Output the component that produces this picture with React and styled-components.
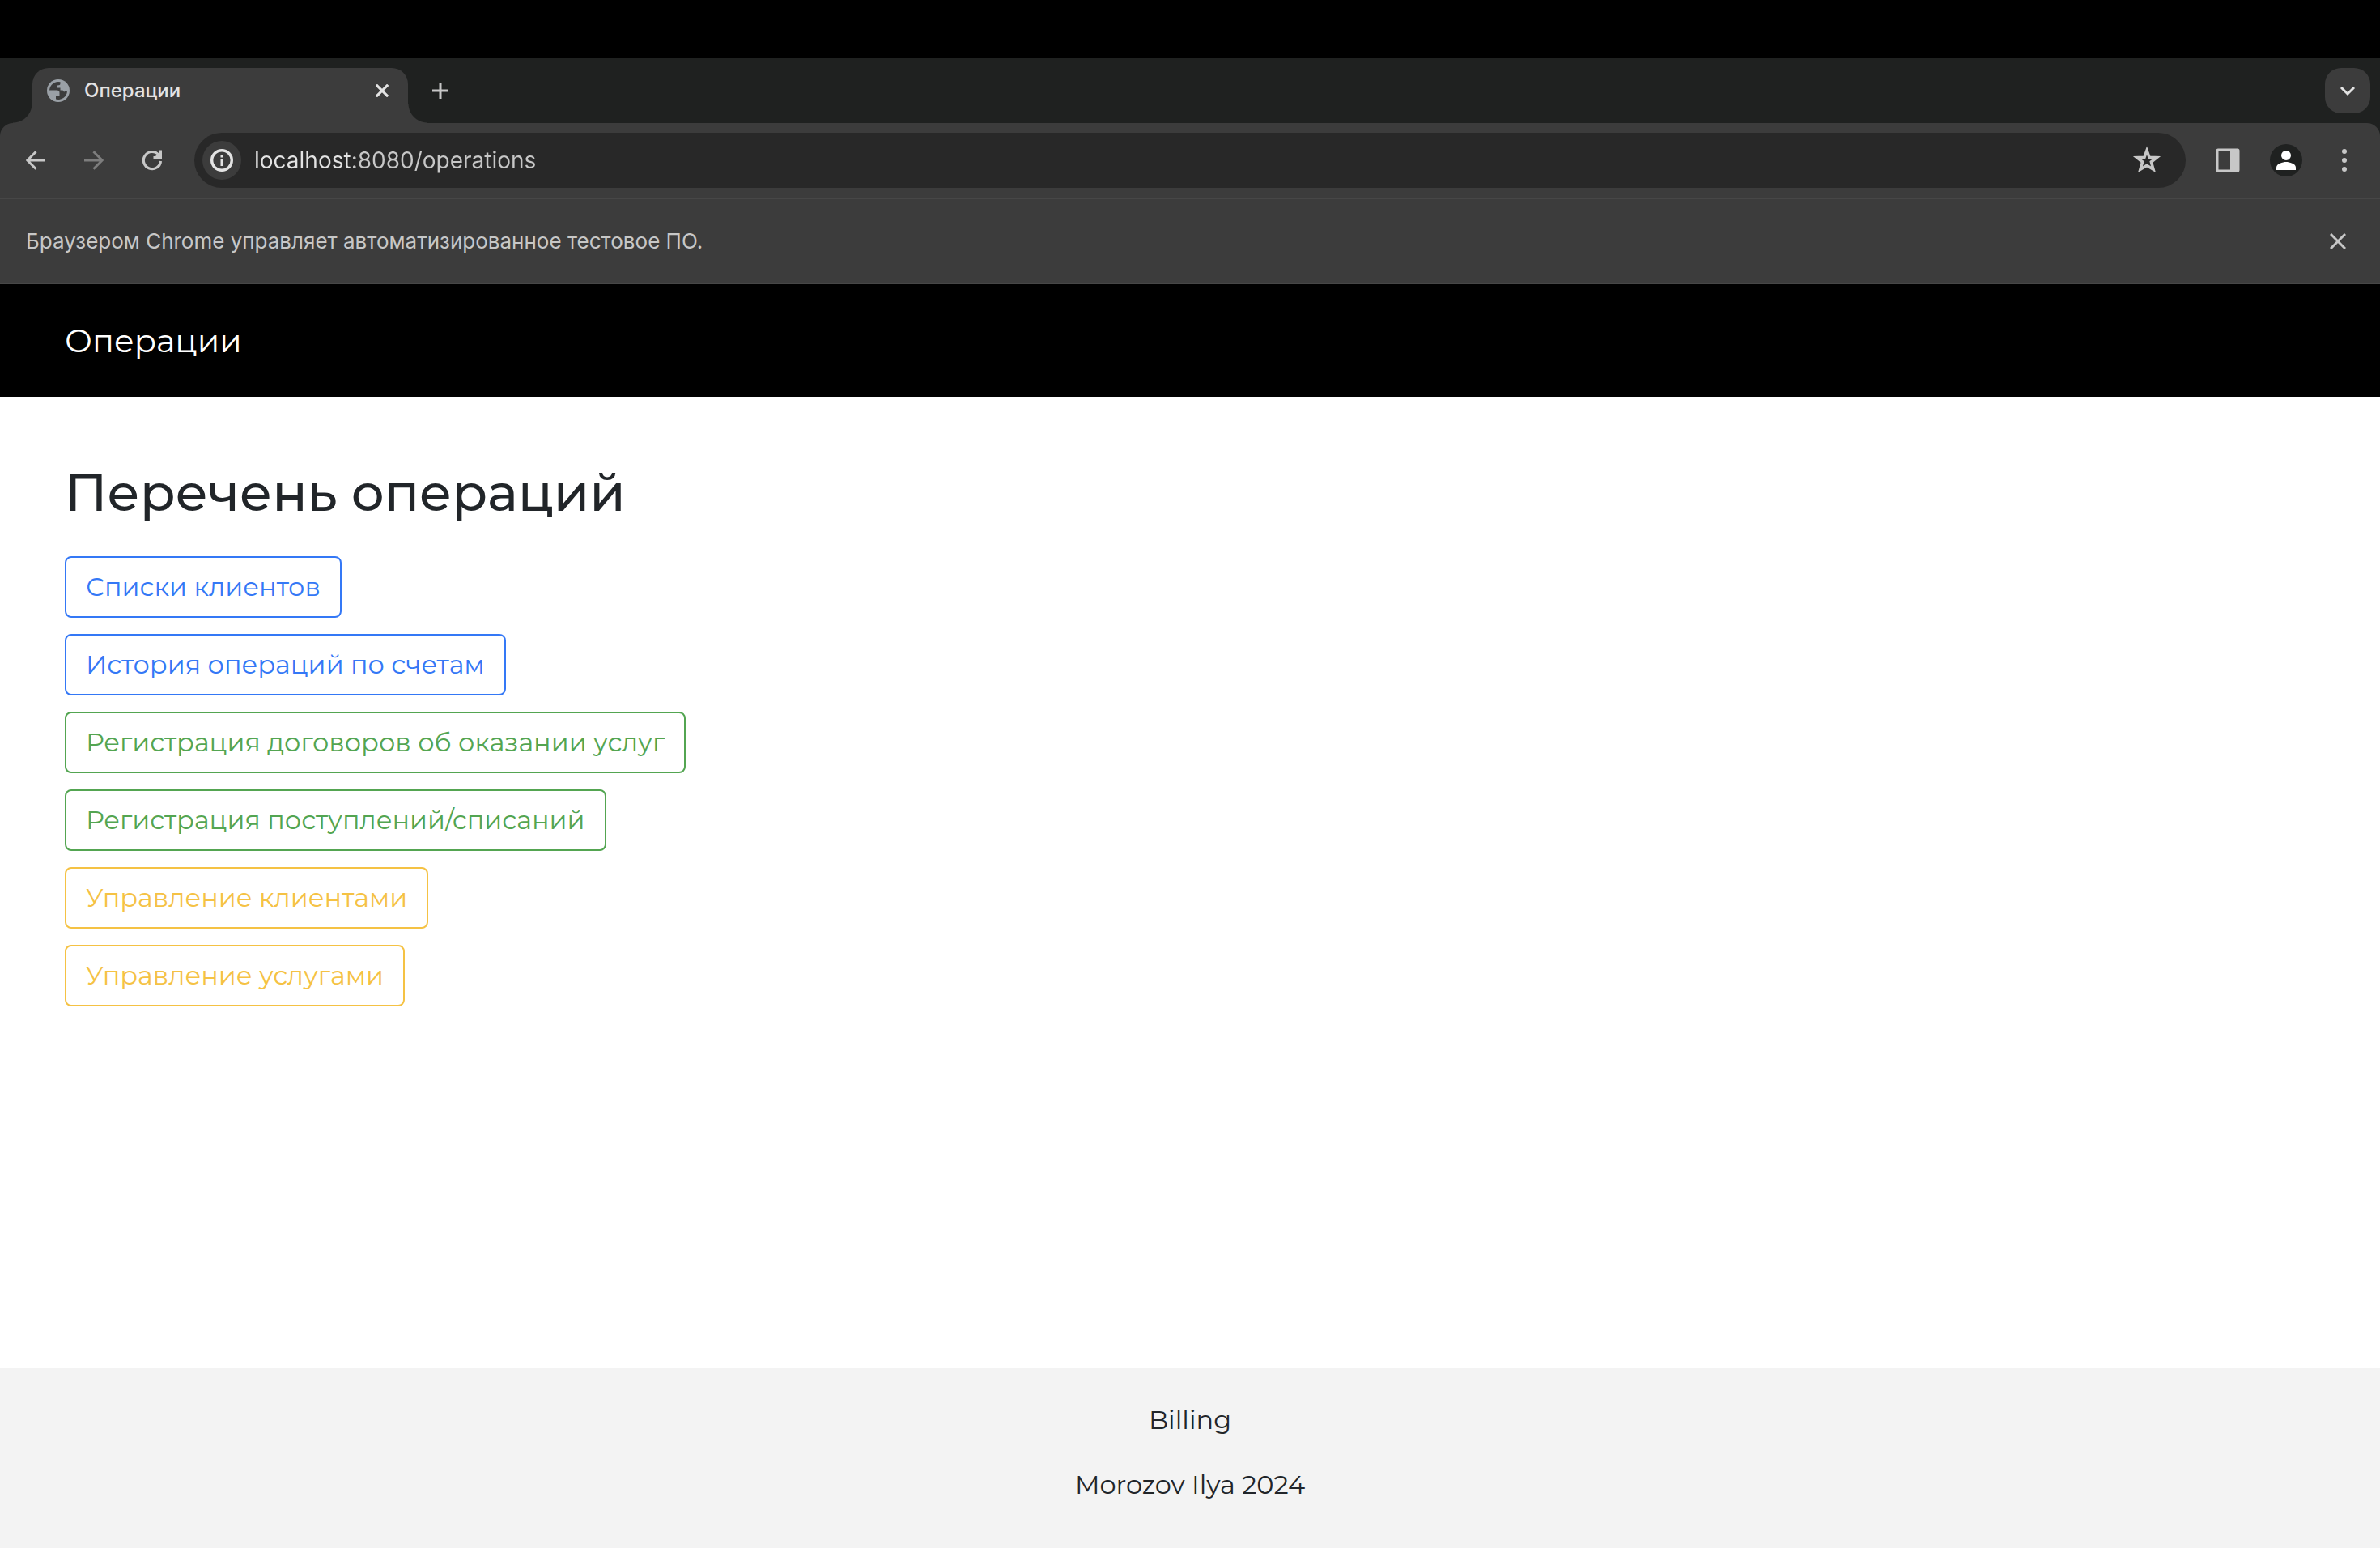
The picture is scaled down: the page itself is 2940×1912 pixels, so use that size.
import React from 'react';
import styled, { createGlobalStyle } from 'styled-components';

const Global = createGlobalStyle`
  * { box-sizing: border-box; }
  body { margin: 0; background: #fff; }
  button { font: inherit; }
`;

const chromeFont = 'Inter, Roboto, sans-serif';
const siteFont = 'Montserrat, Inter, sans-serif';

const tones = {
  primary: '#3478f6',
  success: '#53a551',
  warning: '#f5c244',
};

const Screen = styled.div`
  display: flex;
  flex-direction: column;
  min-height: 100vh;
  padding-top: 72px;
  background: #000;
`;

const Browser = styled.div`
  font-family: ${chromeFont};
  color: #e3e3e3;
  background: #1f2120;
`;

const TabStrip = styled.div`
  display: flex;
  align-items: flex-start;
  height: 80px;
  padding: 12px 12px 0 40px;
`;

const Tab = styled.div`
  position: relative;
  display: flex;
  align-items: center;
  width: 464px;
  height: 68px;
  padding: 0 18px;
  border-radius: 20px 20px 0 0;
  background: #3c3c3c;

  &::before,
  &::after {
    content: '';
    position: absolute;
    bottom: 0;
    width: 24px;
    height: 24px;
  }
  &::before {
    right: 100%;
    background: radial-gradient(circle at 0 0, transparent 23px, #3c3c3c 24px);
  }
  &::after {
    left: 100%;
    background: radial-gradient(circle at 100% 0, transparent 23px, #3c3c3c 24px);
  }
`;

const TabBody = styled.div`
  display: flex;
  flex: 1;
  align-items: center;
  gap: 18px;
  height: 56px;
  margin-bottom: 12px;
`;

const TabTitle = styled.span`
  flex: 1;
  font-size: 24px;
  font-weight: 500;
  line-height: 32px;
`;

const IconButton = styled.button`
  display: flex;
  flex: none;
  align-items: center;
  justify-content: center;
  width: ${(p) => p.$size || 56}px;
  height: ${(p) => p.$size || 56}px;
  padding: 0;
  border: 0;
  border-radius: ${(p) => p.$radius || '50%'};
  background: ${(p) => p.$bg || 'none'};
  color: ${(p) => p.$color || '#c7c7c7'};
`;

const NewTab = styled(IconButton)`
  margin: 0 auto 0 12px;
`;

const Toolbar = styled.div`
  display: flex;
  align-items: center;
  height: 94px;
  padding: 0 16px;
  border-bottom: 2px solid #474747;
  border-radius: 16px 16px 0 0;
  background: #3c3c3c;
`;

const NavGroup = styled.div`
  display: flex;
  gap: 16px;
`;

const Omnibox = styled.div`
  display: flex;
  flex: 1;
  align-items: center;
  gap: 16px;
  height: 68px;
  margin: 0 24px;
  padding: 0 20px 0 10px;
  border-radius: 34px;
  background: #282828;
`;

/* The host part of the address is brighter than the port and path. */
const Address = styled.input`
  flex: 1;
  min-width: 0;
  height: 36px;
  padding: 0;
  border: 0;
  outline: 0;
  background: linear-gradient(90deg, #e3e3e3 120px, #c7c7c7 120px);
  background-clip: text;
  -webkit-background-clip: text;
  -webkit-text-fill-color: transparent;
  color: #c7c7c7;
  font-family: inherit;
  font-size: 28px;
  line-height: 36px;
`;

const InfoBar = styled.div`
  display: flex;
  align-items: center;
  justify-content: space-between;
  height: 105px;
  padding: 0 24px 0 32px;
  border-bottom: 1px solid #474747;
  background: #3c3c3c;
  font-size: 26px;
  line-height: 36px;
  color: #c7c7c7;
`;

const Site = styled.div`
  display: flex;
  flex: 1;
  flex-direction: column;
  background: #fff;
  font-family: ${siteFont};
  font-size: 32px;
  line-height: 48px;
  color: #212529;
`;

const SiteHeader = styled.header`
  padding: 40px 80px;
  background: #000;
`;

const Brand = styled.a`
  display: block;
  width: max-content;
  font-size: 40px;
  line-height: 59px;
  color: #fff;
  text-decoration: none;
`;

const Main = styled.main`
  flex: 1;
  padding: 80px;
`;

const Title = styled.h1`
  margin: 0 0 40px;
  font-size: 64px;
  font-weight: 500;
  line-height: 77px;
`;

const Operations = styled.nav`
  display: flex;
  flex-direction: column;
  align-items: flex-start;
  gap: 20px;
`;

const Operation = styled.a`
  padding: 12px 24px;
  border: 2px solid ${(p) => tones[p.$tone]};
  border-radius: 8px;
  color: ${(p) => tones[p.$tone]};
  text-decoration: none;
`;

const SiteFooter = styled.footer`
  display: flex;
  flex-direction: column;
  gap: 32px;
  padding: 40px 0 54px;
  background: #f3f3f3;
  text-align: center;
`;

const FooterLine = styled.p`
  margin: 0;
`;

const Svg = ({ size = 32, view = 24, children, ...rest }) => (
  <svg width={size} height={size} viewBox={`0 0 ${view} ${view}`} fill="none" aria-hidden="true" {...rest}>
    {children}
  </svg>
);

const Globe = () => (
  <Svg size={28} view={28}>
    <circle cx="14" cy="14" r="14" fill="#9aa0a6" />
    <path
      d="M3 13.500A11 11 0 0 1 16.500 3.300V5C16.500 6.800 15.500 7.500 13 7.500V10.500H16.500V13.500H19.500L21 15.500L25 14A11 11 0 0 1 11 24.600V20.500H15.500V16.500C15.500 14.500 14.500 13.500 12 13.500Z"
      fill="#3c3c3c"
    />
  </Svg>
);

const Cross = ({ size, weight }) => (
  <Svg size={size} view={20} stroke="currentColor" strokeWidth={weight}>
    <path d="M1 1 19 19M19 1 1 19" />
  </Svg>
);

const Arrow = ({ flip }) => (
  <Svg size={24} stroke="currentColor" strokeWidth="3">
    <path d={flip ? 'M0 12H21.500M11.500 1.200 22.200 12 11.500 22.800' : 'M24 12H2.500M12.500 1.200 1.800 12 12.500 22.800'} />
  </Svg>
);

const Reload = () => (
  <Svg size={32} view={32}>
    <path d="M26.500 17A10.600 10.600 0 1 1 24 9.200" stroke="currentColor" strokeWidth="3.200" />
    <path d="M28 3.500V14H17.500V11H25V3.500Z" fill="currentColor" />
    <path d="M20 11 25 6V11Z" fill="currentColor" />
  </Svg>
);

const Info = () => (
  <Svg size={28} view={28}>
    <circle cx="14" cy="14" r="12.300" stroke="currentColor" strokeWidth="3.400" />
    <path d="M12.500 12.500h3V21h-3ZM12.500 7.500h3v3h-3Z" fill="currentColor" />
  </Svg>
);

const Star = () => (
  <Svg size={36} view={36} stroke="currentColor" strokeWidth="3.600">
    <path d="M18 5.800 21 14.300 30.200 14.600 23.400 20 26 29.200 18 24.400 10 29.200 12.600 20 5.800 14.600 15 14.300Z" />
  </Svg>
);

const SidePanel = () => (
  <Svg size={30} view={30}>
    <rect x="2" y="2" width="26" height="26" rx="1" stroke="currentColor" strokeWidth="3" />
    <path d="M18 2h10v26H18Z" fill="currentColor" />
  </Svg>
);

const Person = () => (
  <Svg size={24}>
    <circle cx="12" cy="6" r="6" fill="#fff" />
    <path d="M0 24v-3c0-5 8-7 12-7s12 2 12 7v3Z" fill="#fff" />
  </Svg>
);

const Dots = () => (
  <Svg size={28} view={28}>
    <circle cx="14" cy="3" r="3" fill="currentColor" />
    <circle cx="14" cy="14" r="3" fill="currentColor" />
    <circle cx="14" cy="25" r="3" fill="currentColor" />
  </Svg>
);

const operations = [
  ['Списки клиентов', 'primary'],
  ['История операций по счетам', 'primary'],
  ['Регистрация договоров об оказании услуг', 'success'],
  ['Регистрация поступлений/списаний', 'success'],
  ['Управление клиентами', 'warning'],
  ['Управление услугами', 'warning'],
];

export default function App() {
  return (
    <Screen>
      <Global />
      <Browser>
        <TabStrip>
          <Tab>
            <TabBody>
              <Globe />
              <TabTitle>Операции</TabTitle>
              <IconButton $size={28} $color="#e3e3e3" aria-label="Закрыть вкладку">
                <Cross size={16} weight={4} />
              </IconButton>
            </TabBody>
          </Tab>
          <NewTab aria-label="Новая вкладка">
            <Svg size={20} view={20} stroke="currentColor" strokeWidth="3">
              <path d="M10 0V20M0 10H20" />
            </Svg>
          </NewTab>
          <IconButton $radius="20px" $bg="#3c3c3c" $color="#e3e3e3" aria-label="Поиск вкладок">
            <Svg size={20} view={20} stroke="currentColor" strokeWidth="3">
              <path d="M2 6 10 14 18 6" />
            </Svg>
          </IconButton>
        </TabStrip>
        <Toolbar>
          <NavGroup>
            <IconButton aria-label="Назад">
              <Arrow />
            </IconButton>
            <IconButton $color="#7d7d7d" aria-label="Вперёд">
              <Arrow flip />
            </IconButton>
            <IconButton aria-label="Обновить">
              <Reload />
            </IconButton>
          </NavGroup>
          <Omnibox>
            <IconButton $size={48} $bg="#3c3c3c" $color="#e3e3e3" aria-label="Сведения о сайте">
              <Info />
            </IconButton>
            <Address type="text" aria-label="Адресная строка" defaultValue="localhost:8080/operations" />
            <IconButton aria-label="В закладки">
              <Star />
            </IconButton>
          </Omnibox>
          <NavGroup>
            <IconButton aria-label="Боковая панель">
              <SidePanel />
            </IconButton>
            <IconButton aria-label="Профиль">
              <IconButton as="span" $size={40} $bg="#1f2120">
                <Person />
              </IconButton>
            </IconButton>
            <IconButton aria-label="Меню">
              <Dots />
            </IconButton>
          </NavGroup>
        </Toolbar>
        <InfoBar>
          Браузером Chrome управляет автоматизированное тестовое ПО.
          <IconButton aria-label="Закрыть">
            <Cross size={20} weight={3} />
          </IconButton>
        </InfoBar>
      </Browser>
      <Site>
        <SiteHeader>
          <Brand href="#operations">Операции</Brand>
        </SiteHeader>
        <Main>
          <Title>Перечень операций</Title>
          <Operations>
            {operations.map(([label, tone]) => (
              <Operation key={label} href="#operations" $tone={tone}>
                {label}
              </Operation>
            ))}
          </Operations>
        </Main>
        <SiteFooter>
          <FooterLine>Billing</FooterLine>
          <FooterLine>Morozov Ilya 2024</FooterLine>
        </SiteFooter>
      </Site>
    </Screen>
  );
}
